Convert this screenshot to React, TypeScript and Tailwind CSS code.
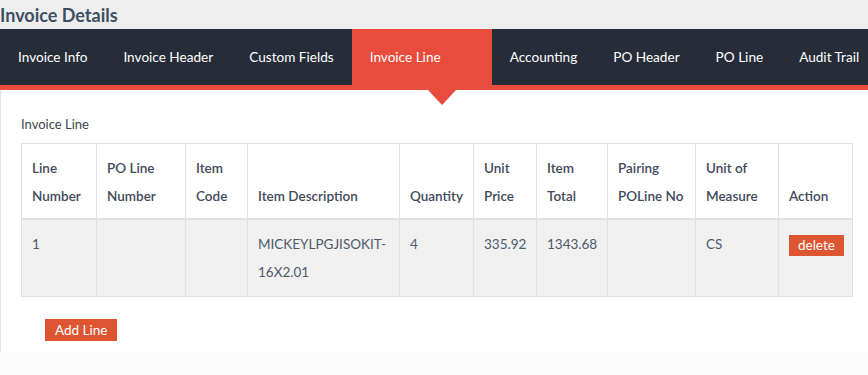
import React from "react";

const tabs = [
  "Invoice Info",
  "Invoice Header",
  "Custom Fields",
  "Invoice Line",
  "Accounting",
  "PO Header",
  "PO Line",
  "Audit Trail",
];

const columns: { label: React.ReactNode; width: string }[] = [
  { label: <>Line<br />Number</>, width: "w-[75px]" },
  { label: <>PO Line<br />Number</>, width: "w-[89px]" },
  { label: <>Item<br />Code</>, width: "w-[62px]" },
  { label: "Item Description", width: "w-[152px]" },
  { label: "Quantity", width: "w-[74px]" },
  { label: <>Unit<br />Price</>, width: "w-[63px]" },
  { label: <>Item<br />Total</>, width: "w-[71px]" },
  { label: <>Pairing<br />POLine No</>, width: "w-[88px]" },
  { label: <>Unit of<br />Measure</>, width: "w-[83px]" },
  { label: "Action", width: "w-[74px]" },
];

const row = ["1", "", "", <>MICKEYLPGJISOKIT-<br />16X2.01</>, "4", "335.92", "1343.68", "", "CS"];

export default function App() {
  const active = "Invoice Line";

  return (
    <div className="min-h-screen bg-[#fbfbfb] font-['Lato',sans-serif]">
      <div className="bg-[#eeeeee]">
        <h1 className="h-[29px] whitespace-nowrap text-[18px] font-bold leading-[31px] text-[#3d4f63]">Invoice Details</h1>
      </div>
      <nav className="flex h-[56px] bg-[#262d39]">
        {tabs.map((t) =>
          t === active ? (
            <div key={t} className="relative flex w-[140px] shrink-0 items-center whitespace-nowrap bg-[#e84c3d] px-[18px] text-[13.6px] text-white">
              {t}
              <span className="absolute left-[76px] top-[61px] h-0 w-0 border-x-[14px] border-t-[15px] border-x-transparent border-t-[#e84c3d]" />
            </div>
          ) : (
            <div key={t} className="flex shrink-0 items-center whitespace-nowrap px-[18px] text-[13.6px] text-white">
              {t}
            </div>
          )
        )}
      </nav>
      <div className="h-[5px] bg-[#e84c3d]" />
      <div className="border-l border-[#e2e2e2] bg-white pb-[11px] pl-[20px] pr-[16px] pt-[25px]">
        <div className="mb-[10px] text-[13px] leading-[18px] text-[#3d4450]">Invoice Line</div>
        <table className="w-[831px] table-fixed border-collapse text-[13.5px] text-[#4d5a6b]">
          <thead>
            <tr className="bg-white">
              {columns.map((c, i) => (
                <th
                  key={i}
                  className={`${c.width} whitespace-nowrap border border-b-2 border-[#dfe1e6] px-[10px] pb-[8px] pt-[10px] text-left align-bottom font-semibold leading-[28px] text-[#3f4a5a]`}
                >
                  {c.label}
                </th>
              ))}
            </tr>
          </thead>
          <tbody>
            <tr className="bg-[#f1f1f1]">
              {row.map((v, i) => (
                <td key={i} className="whitespace-nowrap border border-[#dfe1e6] px-[10px] pb-[10px] pt-[10px] align-top leading-[28px]">
                  {v}
                </td>
              ))}
              <td className="border border-[#dfe1e6] px-[10px] pb-[10px] pt-[15px] align-top">
                <button className="h-[21px] whitespace-nowrap bg-[#dd5631] px-[9px] text-[13.5px] leading-[21px] text-white">delete</button>
              </td>
            </tr>
          </tbody>
        </table>
        <button className="ml-[24px] mt-[22px] h-[22px] bg-[#dd5631] px-[10px] text-[13.5px] leading-[22px] text-white">
          Add Line
        </button>
      </div>
    </div>
  );
}
